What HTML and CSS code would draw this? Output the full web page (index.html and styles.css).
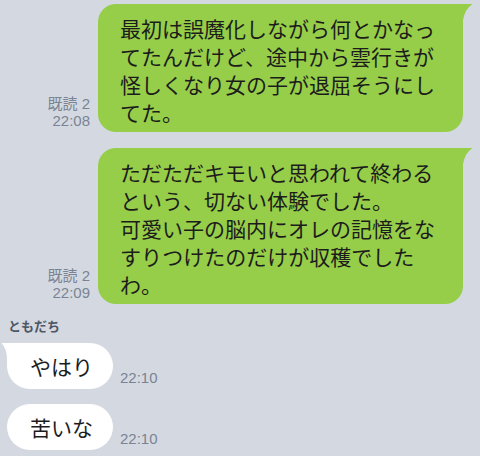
FILE: index.html
```html
<!DOCTYPE html>
<html lang="ja">
<head>
<meta charset="utf-8">
<link rel="stylesheet" href="styles.css">
</head>
<body>
<div class="chat">
  <div class="row row-me">
    <div class="meta"><span>既読 2</span><span>22:08</span></div>
    <div class="bubble bubble-me">
      <svg class="tail-me" viewBox="0 0 10 16" width="10" height="16"><path d="M0 0 H9.5 Q2 5 0 16 Z"/></svg>
      最初は誤魔化しながら何とかなってたんだけど、途中から雲行きが怪しくなり女の子が退屈そうにしてた。
    </div>
  </div>
  <div class="row row-me">
    <div class="meta"><span>既読 2</span><span>22:09</span></div>
    <div class="bubble bubble-me">
      <svg class="tail-me" viewBox="0 0 10 16" width="10" height="16"><path d="M0 0 H9.5 Q2 5 0 16 Z"/></svg>
      ただただキモいと思われて終わるという、切ない体験でした。<br>可愛い子の脳内にオレの記憶をなすりつけたのだけが収穫でしたわ。
    </div>
  </div>
  <div class="name">ともだち</div>
  <div class="row row-you">
    <div class="bubble bubble-you">
      <svg class="tail-you" viewBox="0 0 10 16" width="10" height="16"><path d="M0.5 0 H10 V16 H6 Q6 6 0.5 0 Z"/></svg>
      やはり
    </div>
    <div class="time">22:10</div>
  </div>
  <div class="row row-you">
    <div class="bubble bubble-you bubble-plain">苦いな</div>
    <div class="time">22:10</div>
  </div>
</div>
</body>
</html>
```
FILE: styles.css
```css
html, body {
  margin: 0;
  padding: 0;
  background: #d4d9e1;
}
body {
  width: 480px;
  height: 456px;
  overflow: hidden;
  font-family: "Noto Sans CJK JP", sans-serif;
  color: #1c1c1c;
}
.chat {
  display: flex;
  flex-direction: column;
  padding: 4px 17px 0 7px;
}
.row {
  display: flex;
  align-items: flex-end;
}
.row-me {
  justify-content: flex-end;
  margin-bottom: 16px;
}
.row-me + .name {
  margin-top: -2px;
}
.meta {
  display: flex;
  flex-direction: column;
  align-items: flex-end;
  margin-right: 8px;
  padding-bottom: 3px;
  font-family: "Liberation Sans", "Noto Sans CJK JP", sans-serif;
  font-size: 15px;
  line-height: 17px;
  color: #7a8393;
}
.bubble {
  position: relative;
  font-size: 21px;
  line-height: 28px;
}
.bubble-me {
  width: 325px;
  background: #96ce49;
  border-radius: 18px 0 18px 18px;
  padding: 10px 18px 6px 22px;
}
.tail-me {
  position: absolute;
  top: 0;
  right: -10px;
  fill: #96ce49;
}
.name {
  font-size: 13px;
  font-weight: bold;
  line-height: 16px;
  color: #4f5664;
  padding-left: 1px;
  margin-bottom: 9px;
}
.row-you {
  margin-bottom: 15px;
}
.bubble-you {
  background: #ffffff;
  border-radius: 0 23px 23px 23px;
  padding: 9px 20px 9px 23px;
}
.bubble-plain {
  border-radius: 23px;
}
.tail-you {
  position: absolute;
  top: 0;
  left: -6px;
  fill: #ffffff;
}
.time {
  margin-left: 7px;
  margin-bottom: 3px;
  font-family: "Liberation Sans", sans-serif;
  font-size: 15px;
  line-height: 17px;
  color: #7a8393;
}
```
